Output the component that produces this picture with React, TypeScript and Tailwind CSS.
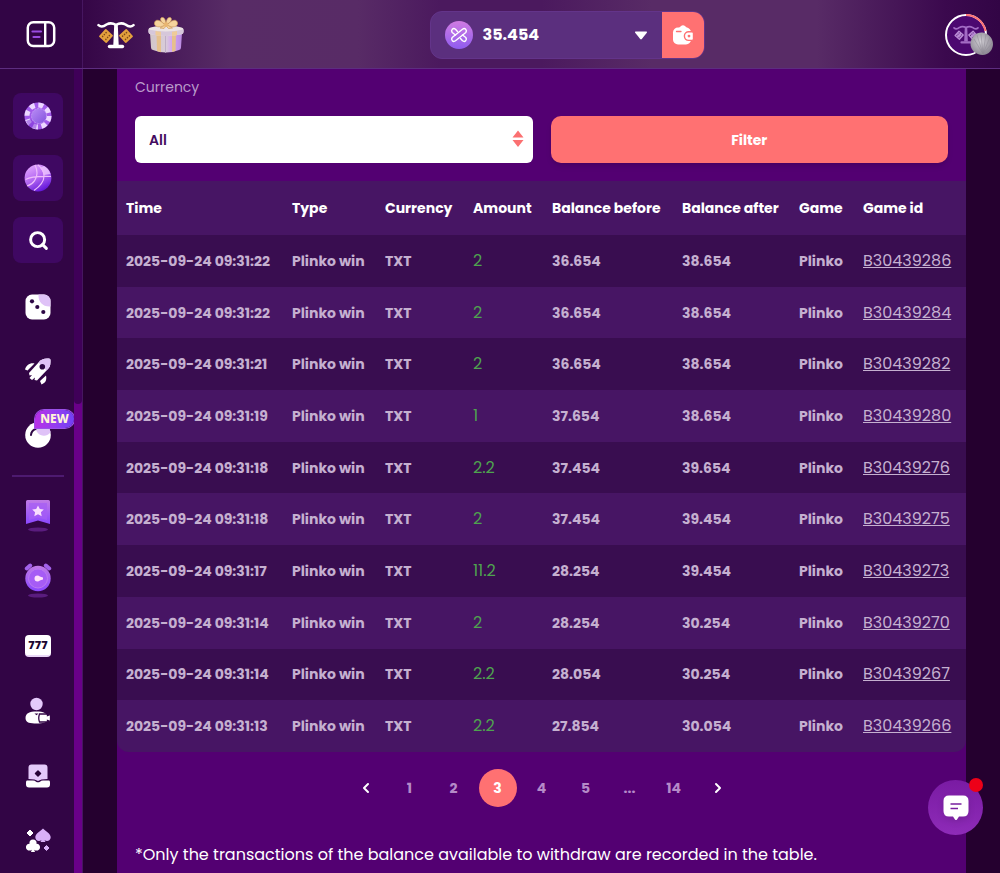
import React from "react";
import { ChevronLeft, ChevronRight, Search } from "lucide-react";

type Row = [time: string, amount: string, before: string, after: string, id: string];

const rows: Row[] = [
  ["2025-09-24 09:31:22", "2", "36.654", "38.654", "B30439286"],
  ["2025-09-24 09:31:22", "2", "36.654", "38.654", "B30439284"],
  ["2025-09-24 09:31:21", "2", "36.654", "38.654", "B30439282"],
  ["2025-09-24 09:31:19", "1", "37.654", "38.654", "B30439280"],
  ["2025-09-24 09:31:18", "2.2", "37.454", "39.654", "B30439276"],
  ["2025-09-24 09:31:18", "2", "37.454", "39.454", "B30439275"],
  ["2025-09-24 09:31:17", "11.2", "28.254", "39.454", "B30439273"],
  ["2025-09-24 09:31:14", "2", "28.254", "30.254", "B30439270"],
  ["2025-09-24 09:31:14", "2.2", "28.054", "30.254", "B30439267"],
  ["2025-09-24 09:31:13", "2.2", "27.854", "30.054", "B30439266"],
];

const columns: { label: string; width: string }[] = [
  { label: "Time", width: "w-[166px]" },
  { label: "Type", width: "w-[93px]" },
  { label: "Currency", width: "w-[88px]" },
  { label: "Amount", width: "w-[79px]" },
  { label: "Balance before", width: "w-[130px]" },
  { label: "Balance after", width: "w-[117px]" },
  { label: "Game", width: "w-[64px]" },
  { label: "Game id", width: "w-[112px]" },
];

function PanelIcon() {
  return (
    <svg width="30" height="28" viewBox="0 0 30 28" fill="none" strokeLinecap="round">
      <rect x="1.800" y="2.300" width="26.400" height="23.600" rx="5.500" stroke="#fff" strokeWidth="2.500" />
      <path d="M19.200 3v22.500" stroke="#fff" strokeWidth="2.400" />
      <path d="M6.500 11.500h8.500M7.500 17h6" stroke="#9a4be0" strokeWidth="2.200" />
    </svg>
  );
}

function ScalesLogo({ main, dice, dot, size }: { main: string; dice: string; dot: string; size: number }) {
  return (
    <svg width={size} height={(size * 28) / 38} viewBox="0 0 38 28">
      <path
        d="M1.500 4.200C4 6.500 7 5.500 9.500 3.500c3-1.600 6.500-1.300 9.500.300 3-1.600 6.500-1.900 9.500-.300 2.500 2 5.500 3 8 .700"
        fill="none" stroke={main} strokeWidth="2.500" strokeLinecap="round"
      />
      <path d="M17.200 4h3.600l.9 20h-5.400z" fill={main} />
      <path d="M12.500 25.500h13" stroke={main} strokeWidth="3.400" strokeLinecap="round" />
      {[9, 29].map((x) => (
        <g key={x} transform={`translate(${x} 15) rotate(${x === 9 ? 42 : 48})`}>
          <rect x="-5.200" y="-5.200" width="10.400" height="10.400" rx="1" fill={dice} />
          {[-2.6, 0, 2.6].map((a) => [-2.2, 2.2].map((b) => <circle key={`${a}${b}`} cx={b} cy={a} r=".8" fill={dot} />))}
        </g>
      ))}
    </svg>
  );
}

function GiftIcon() {
  return (
    <svg width="38" height="38" viewBox="0 0 38 38">
      <defs>
        <linearGradient id="giftBox" x1="0" x2="1">
          <stop offset="0" stopColor="#d2c6c8" />
          <stop offset=".5" stopColor="#d9ccd9" />
          <stop offset=".7" stopColor="#d2a4f2" />
          <stop offset="1" stopColor="#b98ae0" />
        </linearGradient>
      </defs>
      <path d="M3 17l16 2.500L35 17l-1 14.500q0 2-2 2.500Q19 39 6 34q-2-.5-2-2.500z" fill="url(#giftBox)" />
      <path d="M9.500 18.500l4.500.8v17l-4-1.300zM25 19.300l4-.8-.5 16.500-3.500 1z" fill="#e6c08c" />
      <path d="M18.500 20v17" stroke="#b9a6c0" strokeWidth=".8" />
      <path d="M1.500 13.500Q1.500 12 3.500 11.500L15 9h9l10.500 2.500q2 .5 2 2V16q0 2-2 2.300-15.500 3.500-31 0Q1.500 18 1.500 16z" fill="#ece4e4" />
      <path d="M1.500 13.500Q19 17.500 36.500 13.500V16q0 2-2 2.300-15.500 3.500-31 0Q1.500 18 1.500 16z" fill="#d6c7da" />
      <path d="M8.500 15l5.500.8V20l-5.500-.8zM25 15.800l5-.8v4.200l-5 .8z" fill="#efcb98" />
      <g fill="#f5d49d" stroke="#d09c5c" strokeWidth=".7">
        <path d="M18 9C12 12.500 7 10.500 7.500 7S12 2.500 18 9zM20 9c6 3.500 11 1.500 10.500-2S26 2.500 20 9z" />
        <path d="M18.500 8.500C13 6 12.500 2 15 1.500S19 5 19 8zM19.500 8.500C25 6 25.500 2 23 1.500S19 5 19 8z" />
        <path d="M17.500 9.500L13 12l4 .5 2-2.500 2.500 2.500 4-.5-4.500-2.500z" />
      </g>
      <circle cx="19" cy="8.700" r="2.400" fill="#e8b671" />
    </svg>
  );
}

function Gradients() {
  return (
    <svg width="0" height="0" className="absolute" aria-hidden="true">
      <defs>
        <linearGradient id="violet" x1="0" y1="0" x2="0" y2="1">
          <stop offset="0" stopColor="#c07ae6" />
          <stop offset="1" stopColor="#8b47ff" />
        </linearGradient>
        <linearGradient id="orb" x1=".2" y1="0" x2=".7" y2="1">
          <stop offset="0" stopColor="#e3a6ff" />
          <stop offset=".5" stopColor="#b468f2" />
          <stop offset="1" stopColor="#5c0fd8" />
        </linearGradient>
        <linearGradient id="chipCore" x1="0" y1="0" x2="1" y2="1">
          <stop offset="0" stopColor="#b98df5" />
          <stop offset="1" stopColor="#8352dd" />
        </linearGradient>
      </defs>
    </svg>
  );
}

function ChipIcon() {
  return (
    <svg width="28" height="28" viewBox="0 0 28 28">
      <circle cx="14" cy="14" r="13.500" fill="#a25aea" />
      <circle cx="14" cy="14" r="11" fill="none" stroke="#ecd8ff" strokeWidth="5" strokeDasharray="5 3.640" />
      <path d="M2 19A13 13 0 0 0 12 27l1-5a9 9 0 0 1-6-5z" fill="#7a2fd6" opacity=".5" />
      <circle cx="15" cy="14" r="7.500" fill="url(#chipCore)" stroke="#c79ff7" strokeWidth=".8" strokeDasharray="2 1" />
    </svg>
  );
}

function BasketballIcon() {
  return (
    <svg width="28" height="28" viewBox="0 0 28 28">
      <circle cx="14" cy="14" r="13.400" fill="url(#orb)" />
      <path d="M20 2a13.400 13.400 0 0 1 6.500 8L20 11q-1-4-4-7z" fill="#efc8ff" opacity=".8" />
      <path d="M1.500 15.500C9 11.500 17 12.500 27 12.500M14 1c4 3 6 7 6 11 0 6-5 11-10 14.500M3 22c7-2 10-8 10-13 0-3-1-6-2-8" fill="none" stroke="#eebcfb" strokeWidth="1.200" />
    </svg>
  );
}

function DiceIcon() {
  return (
    <svg width="26" height="26" viewBox="0 0 26 26">
      <rect x=".5" y=".5" width="25" height="25" rx="6.500" fill="#fff" />
      <path d="M13.500.5H19A6.500 6.500 0 0 1 25.500 7v5.500C18 13 13 8 13.500.5z" fill="#dfc2f7" />
      <g fill="#2d0745"><circle cx="7" cy="7.300" r="2.100" /><circle cx="12.300" cy="13" r="2.100" /><circle cx="18.300" cy="18" r="2.100" /></g>
    </svg>
  );
}

function RocketIcon() {
  return (
    <svg width="26" height="27" viewBox="0 0 26 27">
      <path d="M4 15L13.500 4.500C16 1.500 18.500.5 22 .5h2q1.500 0 1.500 1.500v2c0 3.500-1 6-4 8.500L12 22.500l-2.500-.500.5-2.500-3 2.500L4.500 20 7 17l-2.500.5z" fill="#fff" />
      <path d="M13.500 4.500C16 1.500 18.500.5 22 .5h2q1.500 0 1.500 1.500v2c0 3.500-1 6-4 8.500z" fill="#dfc2f7" />
      <circle cx="17.300" cy="8.700" r="2.800" fill="#2d0745" />
      <path d="M9.500 5.500L2.500 12.500 0 11.500C1 7.500 5 4.500 9.500 5.500zM21 17.500L15 23l1.500 3.500c4-1.500 5.500-4.500 4.500-9z" fill="#fff" />
    </svg>
  );
}

function BallIcon() {
  return (
    <svg width="26" height="26" viewBox="0 0 26 26">
      <circle cx="13" cy="13" r="12.800" fill="#fff" />
      <path d="M9.500.700A12.800 12.800 0 0 1 25.700 10C22 16 10 16 9.500.7z" fill="#dfc2f7" />
      <path d="M6 13c.2-3 2-5 4.500-6M13.500 5.500h1" stroke="#2d0745" strokeWidth="2" fill="none" strokeLinecap="round" />
    </svg>
  );
}

function BookmarkIcon() {
  return (
    <svg width="26" height="34" viewBox="0 0 26 34">
      <path d="M1 2.500Q1 1 2.500 1h21Q25 1 25 2.500V25l-12-3.500L1 25z" fill="url(#violet)" />
      <path d="M4 4h18v17l-9-2.500L4 21z" fill="#a55df5" opacity=".7" />
      <path d="M13 6.500l1.800 3.500 4 .500-2.900 2.800.8 4-3.700-2-3.700 2 .8-4-2.900-2.800 4-.500z" fill="#f9ddff" />
      <ellipse cx="13" cy="30.500" rx="10" ry="2" fill="#8234b8" opacity=".5" />
    </svg>
  );
}

function ClockIcon() {
  return (
    <svg width="28" height="36" viewBox="0 0 28 36">
      <path d="M2.800 5.500l3.400-3M25.200 5.500l-3.400-3" stroke="#a262ea" strokeWidth="4" strokeLinecap="round" />
      <circle cx="14" cy="15.500" r="12.700" fill="url(#violet)" />
      <circle cx="14" cy="15.500" r="9.500" fill="#a65cf5" stroke="#bb79f0" strokeWidth="1" />
      <path d="M13.500 12.500a3 3 0 1 0 0 6c2 0 2.500-1.700 5.500-2v-2c-3-.3-3.500-2-5.500-2z" fill="#ffe1fa" />
      <ellipse cx="14" cy="32.500" rx="10" ry="2" fill="#8234b8" opacity=".5" />
    </svg>
  );
}

function SevensIcon() {
  return (
    <span className="flex h-[22px] w-[26px] items-center justify-center rounded border-b-2 border-[#ead8f7] bg-white font-['Open_Sans',sans-serif] text-[11px] leading-none font-extrabold text-[#1d0630]">
      777
    </span>
  );
}

function DealerIcon() {
  return (
    <svg width="26" height="27" viewBox="0 0 26 27">
      <circle cx="11.500" cy="7" r="6.200" fill="#e4cafa" />
      <path d="M.5 21c0-5 4-6.500 11-6.500s11 1.500 11 6.500-5 5.500-11 5.500S.5 26 .5 21z" fill="#fff" />
      <path d="M14.500 17h7q1 0 1 1.500l3-1v7l-3-1q0 1.500-1 1.500h-7q-1.500-4 0-8z" fill="#fff" stroke="#320545" strokeWidth="1.300" />
      <path d="M9.500 16.500l2 1.800 2-1.800z" fill="#320545" />
    </svg>
  );
}

function BoxIcon() {
  return (
    <svg width="24" height="24" viewBox="0 0 24 24">
      <path d="M2.500 3.500Q2.500.5 5.500.5h13q3 0 3 3V15l-6 .5-3.500 1.500L8.500 15.500l-6-.5z" fill="#e4cafa" />
      <path d="M12 7l2.500 2.500L12 12 9.500 9.500z" fill="#260336" stroke="#260336" strokeWidth="1.500" strokeLinejoin="round" />
      <path d="M1 16.500h6q2 0 3 1.300 2 1 4 0 1-1.300 3-1.300h6q1 0 1 2v2q0 3-3 3H3q-3 0-3-3v-2q0-2 1-2z" fill="#fff" />
    </svg>
  );
}

function SuitsIcon() {
  return (
    <svg width="26" height="26" viewBox="0 0 26 26">
      <path d="M5 2l3 3-3 3-3-3z" fill="#fff" stroke="#fff" strokeLinejoin="round" />
      <path d="M21.500 17.500l2.500 2.500-2.500 2.500L19 20z" fill="#d9b0f8" stroke="#d9b0f8" strokeLinejoin="round" />
      <path d="M18 .5c2.500 3 7.700 5 7.700 8.700 0 3.300-3.700 4.800-6.200 2.800l1 2h-5l1-2c-2.500 2-6.200.5-6.200-2.800 0-3.700 5.200-5.700 7.700-8.700z" fill="#d9b0f8" />
      <path d="M8 11.500c2.500 0 4 2 3.500 4.200 2.500 0 3.800 1.800 3.500 4-.300 2.500-3.500 3.800-5.800 2l.8 2.300H6l.8-2.300c-2.300 1.800-5.500.5-5.800-2-.3-2.200 1-4 3.500-4-.5-2.200 1-4.200 3.500-4.200z" fill="#fff" />
    </svg>
  );
}

function CoinIcon() {
  return (
    <svg width="28" height="28" viewBox="0 0 28 28">
      <defs>
        <linearGradient id="coin" x1="0" y1="0" x2="0" y2="1">
          <stop offset="0" stopColor="#d07be2" />
          <stop offset="1" stopColor="#8f5cf0" />
        </linearGradient>
      </defs>
      <circle cx="14" cy="14" r="14" fill="url(#coin)" />
      <g fill="none" stroke="#fff" strokeWidth="1.400" strokeLinecap="round" strokeLinejoin="round">
        <path d="M17.500 8.200q1.800-1.300 3.200.1t.1 3.200L10.500 19.800q-1.800 1.300-3.200-.1t-.1-3.200z" />
        <path d="M12.500 10.500L10.500 8.200q-1.800-1.300-3.200.1t-.1 3.200l3.300 2.500M15.500 17.500l2 2.300q1.800 1.300 3.200-.1t.1-3.200L17.500 14" />
      </g>
    </svg>
  );
}

function WalletIcon() {
  return (
    <svg width="22" height="22" viewBox="0 0 22 22">
      <path d="M6.500 4.500l2.500-2.500q2-1.500 4 0l2.500 2.500z" fill="#fff" />
      <rect x="1" y="3.500" width="18" height="17" rx="5" fill="#fff" />
      <path d="M4.500 7.500h4.500" stroke="#ff7172" strokeWidth="1.300" strokeLinecap="round" />
      <path d="M20 7.800h-3.300a4.300 4.300 0 0 0 0 8.600H20q1.500 0 1.500-1.500V9.300q0-1.500-1.500-1.500z" fill="#fff" stroke="#ff7172" strokeWidth="1.400" />
      <circle cx="17" cy="12.100" r="1.400" fill="#ff7172" />
    </svg>
  );
}

function Avatar() {
  return (
    <svg width="49" height="46" viewBox="0 0 49 46">
      <defs>
        <radialGradient id="shell" cx=".45" cy=".4" r=".65">
          <stop offset="0" stopColor="#d0cdd3" />
          <stop offset="1" stopColor="#87828e" />
        </radialGradient>
      </defs>
      <circle cx="21" cy="23" r="20" fill="#4c0870" stroke="#fff" strokeWidth="2" />
      <path d="M21 3a20 20 0 0 1 19.500 16" fill="none" stroke="#ff7172" strokeWidth="2" />
      <svg x="8" y="13" width="28" height="22">
        <ScalesLogo main="#a36bc4" dice="#b98bd4" dot="#5a187b" size={26} />
      </svg>
      <path d="M25.500 31c1-7 6-11 12-10.500s10.500 6 10.500 11.500-4 11-10.500 11-12.500-5-12-12z" fill="url(#shell)" />
      <path d="M38 42L29 27M38 42l-6-19M38 42l-2-20M38 42l3-20M38 42l7-17M38 42l9-11" stroke="#8d8892" strokeWidth=".5" />
    </svg>
  );
}

const tiles = [
  { label: "Casino", icon: <ChipIcon /> },
  { label: "Sports", icon: <BasketballIcon /> },
  { label: "Search", icon: <Search className="size-[21px] text-white" strokeWidth={3.4} /> },
];
const games = [
  { label: "Dice", icon: <DiceIcon /> },
  { label: "Crash", icon: <RocketIcon /> },
  { label: "Plinko", icon: <BallIcon />, fresh: true },
];
const links = [
  { label: "Favorites", icon: <BookmarkIcon /> },
  { label: "Recent", icon: <ClockIcon /> },
  { label: "Slots", icon: <SevensIcon /> },
  { label: "Live dealer", icon: <DealerIcon /> },
  { label: "Bonus games", icon: <BoxIcon /> },
  { label: "Card games", icon: <SuitsIcon /> },
];

function Sidebar() {
  return (
    <aside className="flex w-[83px] shrink-0 border-r border-[#461660] bg-[#320545]">
      <nav className="flex w-[74px] shrink-0 flex-col items-center overflow-hidden pt-6 pl-0.5">
        <div className="flex flex-col gap-4">
          {tiles.map((t) => (
            <a key={t.label} href="#" aria-label={t.label} className="flex h-[46px] w-[50px] items-center justify-center rounded-lg bg-[#3f0862]">
              {t.icon}
            </a>
          ))}
        </div>
        <div className="mt-3 flex flex-col">
          {games.map((g) => (
            <a key={g.label} href="#" aria-label={g.label} className="relative flex h-16 w-[50px] items-center justify-center">
              {g.icon}
              {g.fresh && (
                <span className="absolute top-[7px] left-[22px] flex h-[18px] w-[39px] items-center justify-center rounded-full rounded-bl-none bg-linear-to-r from-[#b82fe8] to-[#7040f5] font-['Noto_Sans',sans-serif] text-xs font-extrabold text-[#fff4d8] ring-1 ring-[#9b50e8]">
                  NEW
                </span>
              )}
            </a>
          ))}
        </div>
        <hr className="mt-2 h-0.5 w-[52px] shrink-0 border-0 bg-[#4d1a70]" />
        <div className="mt-1.5 flex flex-col">
          {links.map((l) => (
            <a key={l.label} href="#" aria-label={l.label} className="flex h-[65px] w-[50px] items-center justify-center">
              {l.icon}
            </a>
          ))}
        </div>
      </nav>
      <div className="flex flex-1 flex-col bg-[#690089]" aria-hidden="true">
        <div className="h-5/12 rounded-b bg-[#3f0058]" />
      </div>
    </aside>
  );
}

function Header() {
  return (
    <header className="flex h-[69px] shrink-0 border-b border-[#5d2d80] bg-[#320545]">
      <div className="flex w-[83px] shrink-0 items-center justify-center border-r border-[#461660]">
        <button aria-label="Toggle menu"><PanelIcon /></button>
      </div>
      <div className="flex flex-1 items-center justify-between pt-0.5 pr-1.5 pl-[14px] [background-image:linear-gradient(90deg,#350646_0%,#3f1052_5%,#582c66_16%,#582b66_30%,#4b195e_39%,#4b195e_50%,#582b66_62%,#582b66_80%,#3b094e_94%,#320545_100%)]">
        <div className="flex items-center gap-3">
          <a href="#" aria-label="Home"><ScalesLogo main="#fff" dice="#e3a13d" dot="#7d4717" size={38} /></a>
          <button aria-label="Gifts"><GiftIcon /></button>
        </div>
        <div className="ml-1 flex h-12 w-[275px] overflow-hidden rounded-xl border border-[#63348a] bg-[#5b2f7e]">
          <button className="flex flex-1 items-center gap-2.5 px-[14px] text-left">
            <CoinIcon />
            <span className="flex-1 text-base font-bold text-white">35.454</span>
            <svg width="14" height="9" viewBox="0 0 14 9"><path d="M1.500.5h11q1 .2.300 1.200L7.800 8q-.8.800-1.600 0L1.200 1.700Q.5.700 1.500.5z" fill="#fff" /></svg>
          </button>
          <button aria-label="Wallet" className="flex w-[42px] items-center justify-center bg-[#ff7172]"><WalletIcon /></button>
        </div>
        <button aria-label="Profile"><Avatar /></button>
      </div>
    </header>
  );
}

function TransactionsTable() {
  return (
    <div className="overflow-hidden rounded-b-xl">
      <table className="h-[571px] w-full table-fixed border-collapse text-left text-sm font-bold">
        <thead>
          <tr className="h-[54px] bg-[#471564] text-white">
            {columns.map((c) => (
              <th key={c.label} scope="col" className={`${c.width} px-[9px] font-bold whitespace-nowrap`}>{c.label}</th>
            ))}
          </tr>
        </thead>
        <tbody className="text-[#c5b0d0]">
          {rows.map(([time, amount, before, after, id]) => (
            <tr key={id} className="whitespace-nowrap odd:bg-[#390d50] even:bg-[#471564]">
              <td className="px-[9px]">{time}</td>
              <td className="px-[9px]">Plinko win</td>
              <td className="px-[9px]">TXT</td>
              <td className="px-[9px] text-base font-normal text-[#4fa34f]">{amount}</td>
              <td className="px-[9px]">{before}</td>
              <td className="px-[9px]">{after}</td>
              <td className="px-[9px]">Plinko</td>
              <td className="px-[9px] text-base font-normal"><a href="#" className="underline">{id}</a></td>
            </tr>
          ))}
        </tbody>
      </table>
    </div>
  );
}

function Pagination() {
  return (
    <nav aria-label="Pagination" className="mt-[17px] flex items-center justify-center gap-1.5 text-sm font-bold text-[#b58ac8]">
      <button aria-label="Previous page" className="flex size-[38px] items-center justify-center text-white"><ChevronLeft className="size-4" strokeWidth={3} /></button>
      {["1", "2", "3", "4", "5", "...", "14"].map((p) =>
        p === "3" ? (
          <button key={p} aria-current="page" className="size-[38px] rounded-full bg-[#ff7172] text-white">{p}</button>
        ) : (
          <button key={p} className="size-[38px]">{p}</button>
        ),
      )}
      <button aria-label="Next page" className="flex size-[38px] items-center justify-center text-white"><ChevronRight className="size-4" strokeWidth={3} /></button>
    </nav>
  );
}

function ChatButton() {
  return (
    <button aria-label="Open chat" className="fixed right-[17px] bottom-[38px] flex size-[55px] items-center justify-center rounded-full bg-linear-to-b from-[#7a1ba3] to-[#8e2bb8]">
      <svg width="26" height="26" viewBox="0 0 26 26" className="drop-shadow-md">
        <path d="M6 .5h14Q25.500.5 25.500 6v10q0 5.500-5.500 5.500h-4l-2 3q-1 1-2 0l-2-3H6Q.5 21.500.5 16V6Q.5.5 6 .5z" fill="#fff" />
        <path d="M7.500 9h11M7.500 13.500H15" stroke="#78209e" strokeWidth="1.600" />
      </svg>
      <span className="absolute -top-0.5 right-0 size-3.5 rounded-full bg-[#ed0018]" />
    </button>
  );
}

export default function App() {
  return (
    <div className="flex h-screen flex-col overflow-hidden bg-[#25002f] font-[Poppins,Inter,sans-serif]">
      <Gradients />
      <Header />
      <div className="flex min-h-0 flex-1">
        <Sidebar />
        <main className="flex-1 overflow-y-auto px-[34px] [scrollbar-width:none]">
          <section className="min-h-full bg-[#530072]">
            <form className="grid grid-cols-2 items-end gap-[18px] px-[18px] pt-[7px] pb-[18px]" onSubmit={(e) => e.preventDefault()}>
              <div className="flex flex-col gap-[18px]">
                <label htmlFor="currency" className="text-sm leading-[22px] text-[#b99bca]">Currency</label>
                <div className="relative">
                  <select id="currency" className="h-[47px] w-full appearance-none rounded-md bg-white px-[14px] text-sm font-semibold text-[#430c60]">
                    <option>All</option>
                  </select>
                  <svg width="12" height="18" viewBox="0 0 12 18" className="pointer-events-none absolute top-[14px] right-[9px]">
                    <path d="M6 .5L11.500 7.500H.5zM6 17L11.500 10H.5z" fill="#fb7071" />
                  </svg>
                </div>
              </div>
              <button type="submit" className="h-[47px] rounded-[10px] bg-[#ff7172] text-sm font-bold text-white shadow-md">Filter</button>
            </form>
            <TransactionsTable />
            <Pagination />
            <p className="px-[18px] pt-9 pb-2 text-base text-white">
              *Only the transactions of the balance available to withdraw are recorded in the table.
            </p>
          </section>
        </main>
      </div>
      <ChatButton />
    </div>
  );
}
